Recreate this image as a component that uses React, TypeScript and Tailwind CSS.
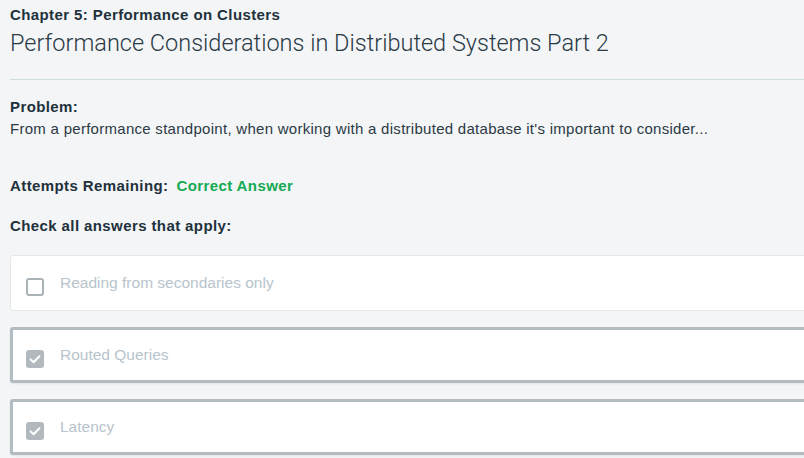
import React from 'react';

const options = [
  { label: 'Reading from secondaries only', checked: false },
  { label: 'Routed Queries', checked: true },
  { label: 'Latency', checked: true },
];

function Box({ checked }: { checked: boolean }) {
  if (!checked) {
    return <div className="mt-2 w-[18px] h-[18px] shrink-0 rounded-[3px] border-2 border-[#a9b2b7] bg-white" />;
  }
  return (
    <div className="mt-2 w-[18px] h-[18px] shrink-0 rounded-[3px] bg-[#b1b9be] flex items-center justify-center">
      <svg width="14" height="14" viewBox="0 0 14 14" fill="none">
        <path d="M2.6 7.4 L5.6 10.2 L11.4 4.2" stroke="white" strokeWidth="2" strokeLinecap="round" strokeLinejoin="round" />
      </svg>
    </div>
  );
}

export default function App() {
  return (
    <div className="w-[804px] h-[458px] overflow-hidden bg-[#f4f5f7] text-[#21313c]" style={{ fontFamily: '"Liberation Sans", Arial, sans-serif' }}>
      <div className="w-[840px] pl-[10px] pt-[6px]">
        <div className="text-[15px] font-bold leading-[18px] tracking-[0.4px]">Chapter 5: Performance on Clusters</div>
        <h1 className="mt-[5px] text-[23.5px] leading-[28px] text-[#2a3a45]" style={{ fontFamily: 'Roboto, "Liberation Sans", sans-serif', fontWeight: 300 }}>
          Performance Considerations in Distributed Systems Part 2
        </h1>
        <div className="mt-[22px] h-px bg-[#cfe0dc]" />

        <div className="mt-[18px] text-[15px] font-bold leading-[18px] tracking-[0.4px]">Problem:</div>
        <p className="mt-[4px] text-[15px] leading-[18px] tracking-[0.28px] text-[#2b3a44]">
          From a performance standpoint, when working with a distributed database it's important to consider...
        </p>

        <div className="mt-[39px] flex gap-[8px] text-[15px] font-bold leading-[18px] tracking-[0.4px]">
          <span>Attempts Remaining:</span>
          <span className="text-[#13aa52]">Correct Answer</span>
        </div>
        <div className="mt-[22px] text-[15px] font-bold leading-[18px] tracking-[0.4px]">Check all answers that apply:</div>

        <div className="mt-[20px] flex flex-col gap-[16px]">
          {options.map((o) =>
            o.checked ? (
              <div key={o.label} className="h-[56px] flex items-center gap-[16px] pl-[13px] bg-white border-[3px] border-[#b3bcc0] rounded-[3px] shadow-[0_1px_2px_rgba(0,0,0,0.08)]">
                <Box checked />
                <span className="text-[15.5px] text-[#b8c4cc]">{o.label}</span>
              </div>
            ) : (
              <div key={o.label} className="h-[56px] flex items-center gap-[16px] pl-[15px] bg-white border border-[#e4e7e9] rounded-[3px]">
                <Box checked={false} />
                <span className="text-[15.5px] text-[#b8c4cc]">{o.label}</span>
              </div>
            )
          )}
        </div>
      </div>
    </div>
  );
}
